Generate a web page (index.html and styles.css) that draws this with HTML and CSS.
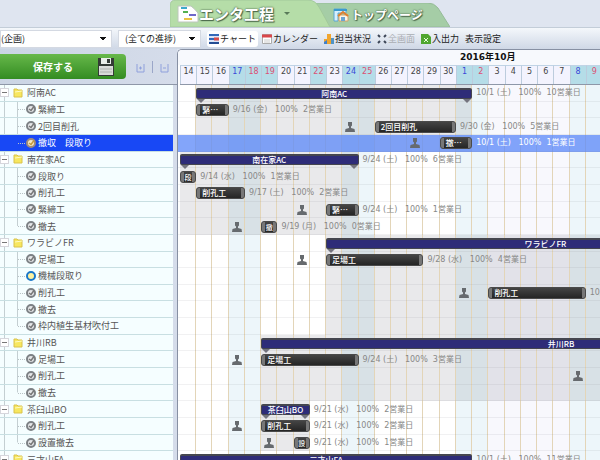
FILE: index.html
```
<!DOCTYPE html>
<html lang="ja">
<head>
<meta charset="utf-8">
<title>エンタ工程</title>
<link rel="stylesheet" href="styles.css">
</head>
<body>
<svg class="defs" aria-hidden="true">
  <symbol id="person" viewBox="0 0 10 10"><path d="M3 0h4v3.500l-1 1v1.500l3.500 1 .5 3h-10l.5-3 3.500-1v-1.500l-1-1z"/></symbol>
  <symbol id="folder" viewBox="0 0 10 10"><path d="M1 1h3l1 1h4v7h-8z" fill="#f7e75f" stroke="#d9c24c"/><path d="M2 4l7-1" stroke="#fffbc0"/></symbol>
  <symbol id="done" viewBox="0 0 10 10"><circle cx="5" cy="5" r="4" fill="#e4e6e8" stroke="#7c8185" stroke-width="2"/><path d="M3 5l2 1.500 3-4" fill="none" stroke="#777" stroke-width="1.500"/></symbol>
  <symbol id="active" viewBox="0 0 10 10"><circle cx="5" cy="5" r="4" fill="#fff2a0" stroke="#1b77c9" stroke-width="2"/></symbol>
  <symbol id="warm" viewBox="0 0 10 10"><circle cx="5" cy="5" r="4" fill="#f6e8c0" stroke="#a08c78" stroke-width="2"/><path d="M3 5l2 1.500 3-4" fill="none" stroke="#c59a3c" stroke-width="1.500"/></symbol>
</svg>
<div class="app">
  <nav class="tabs">
    <a class="tab current" href="#chart">
      <svg class="shape" viewBox="0 0 160 27" preserveAspectRatio="none"><path d="M0 27V6Q0 0 6 0H138Q145 0 149 7L160 27z" fill="#b5dda8" stroke="#a2c99a"/></svg>
      <span class="face">
        <svg class="tabicon" viewBox="0 0 22 18"><path d="M1 1h13q4 3 7 7v9h-20z" fill="#fff" stroke="#bcc6bc"/><path d="M4 3h6" stroke="#3caacb" stroke-width="2"/><path d="M6 7h5" stroke="#54b04f" stroke-width="2"/><path d="M12 10h7" stroke="#6f68ca" stroke-width="2"/><path d="M7 14h8" stroke="#ecc244" stroke-width="2"/></svg>
        <span class="name">エンタ工程</span><i class="caret"></i>
      </span>
    </a>
    <a class="tab" href="#top">
      <svg class="shape" viewBox="0 0 134 24" preserveAspectRatio="none"><path d="M0 0H112Q118 0 122 5L134 24H11z" fill="#a5cda6" stroke="#96bb98"/></svg>
      <span class="face">
        <svg class="homeicon" viewBox="0 0 16 14"><path d="M1 1h12v4H5v8H1z" fill="#d6efff" stroke="#5ba6d2"/><path d="M1 2h13" stroke="#3a9ad0" stroke-width="2"/><path d="M6 7h9v6H6z" fill="#fff6e6" stroke="#d2a06a"/><path d="M5 8l5-4 5 4" fill="none" stroke="#e0812f" stroke-width="2"/><path d="M8 9h4v4H8z" fill="#6aa5d4"/></svg>
        <span class="name">トップページ</span>
      </span>
    </a>
  </nav>

  <header class="toolbar">
    <select class="pick area" aria-label="企画"><option>(企画)</option></select>
    <select class="pick" aria-label="進捗"><option>(全ての進捗)</option></select>
    <button class="tool on"><svg viewBox="0 0 10 10"><path d="M0 0h10v10H0z" fill="#dce6f8"/><path d="M0 1h10M0 5h7" stroke="#3569b8" stroke-width="2"/><path d="M5 5h5" stroke="#d84b4b" stroke-width="3"/><path d="M0 9h10" stroke="#244d94" stroke-width="2"/></svg>チャート</button>
    <button class="tool"><svg viewBox="0 0 10 10"><path d="M.5.5h9v9h-9z" fill="#fff" stroke="#aaa"/><path d="M0 2h10" stroke="#d9474b" stroke-width="3"/><path d="M2 6h6M2 8h6" stroke="#ccc"/></svg>カレンダー</button>
    <button class="tool"><svg viewBox="0 0 10 10"><path d="M0 5h3v5H0z" fill="#f0a52e"/><path d="M3 0h4v10H3z" fill="#f0a52e"/><path d="M0 8l3-2v4H0z" fill="#3d80cd"/><path d="M7 4h3v6H7z" fill="#4f94c8"/></svg>担当状況</button>
    <button class="tool off" disabled><svg viewBox="0 0 10 10"><path d="M1 1l2 2M9 1l-2 2M1 9l2-2M9 9l-2-2" stroke="#3d4657" stroke-width="2"/></svg>全画面</button>
    <button class="tool"><svg viewBox="0 0 10 10"><path d="M0 0h7l3 3v7H0z" fill="#4fa62f"/><path d="M3 4l4 4M7 4l-4 4" stroke="#e7ffd9"/></svg>入出力</button>
    <button class="tool">表示設定</button>
  </header>

  <main class="work">
    <section class="side">
      <div class="actions">
        <button class="save"><span>保存する</span>
          <svg viewBox="0 0 18 18"><path d="M1 0h16v18H1z" fill="#343b36"/><path d="M4 0h10v6H4z" fill="#e9eee9"/><path d="M10 1h3v4h-3z" fill="#343b36"/><path d="M2 8h14v9H2z" fill="#d9dcd9"/><path d="M3 11h12M3 14h12" stroke="#aeb3ae"/></svg>
        </button>
        <button class="fold" aria-label="すべて開く"><svg viewBox="0 0 9 9"><path d="M1 0v8h7V0M3 4h3M4.500 2.500v3" fill="none" stroke="#8fa0dc"/></svg></button>
        <i class="rule"></i>
        <button class="fold" aria-label="すべて閉じる"><svg viewBox="0 0 9 9"><path d="M1 0v8h7V0M3 4h3" fill="none" stroke="#8fa0dc"/></svg></button>
      </div>
      <ul class="tree">
        <li class="group"><button class="toggle" aria-label="閉じる"></button><svg><use href="#folder"/></svg><span>阿南AC</span></li>
        <li><svg><use href="#done"/></svg><span>緊締工</span></li>
        <li><svg><use href="#done"/></svg><span>2回目削孔</span></li>
        <li class="last selected"><svg><use href="#warm"/></svg><span>撤収　段取り</span></li>
        <li class="group"><button class="toggle" aria-label="閉じる"></button><svg><use href="#folder"/></svg><span>南在家AC</span></li>
        <li><svg><use href="#done"/></svg><span>段取り</span></li>
        <li><svg><use href="#done"/></svg><span>削孔工</span></li>
        <li><svg><use href="#done"/></svg><span>緊締工</span></li>
        <li class="last"><svg><use href="#done"/></svg><span>撤去</span></li>
        <li class="group"><button class="toggle" aria-label="閉じる"></button><svg><use href="#folder"/></svg><span>ワラビノFR</span></li>
        <li><svg><use href="#done"/></svg><span>足場工</span></li>
        <li><svg><use href="#active"/></svg><span>機械段取り</span></li>
        <li><svg><use href="#done"/></svg><span>削孔工</span></li>
        <li><svg><use href="#done"/></svg><span>撤去</span></li>
        <li class="last"><svg><use href="#done"/></svg><span>枠内植生基材吹付工</span></li>
        <li class="group"><button class="toggle" aria-label="閉じる"></button><svg><use href="#folder"/></svg><span>井川RB</span></li>
        <li><svg><use href="#done"/></svg><span>足場工</span></li>
        <li><svg><use href="#done"/></svg><span>削孔工</span></li>
        <li class="last"><svg><use href="#done"/></svg><span>撤去</span></li>
        <li class="group"><button class="toggle" aria-label="閉じる"></button><svg><use href="#folder"/></svg><span>茶臼山BO</span></li>
        <li><svg><use href="#done"/></svg><span>削孔工</span></li>
        <li class="last"><svg><use href="#done"/></svg><span>設置撤去</span></li>
        <li class="group"><button class="toggle" aria-label="閉じる"></button><svg><use href="#folder"/></svg><span>三才山FA</span></li>
      </ul>
    </section>

    <section class="chart">
      <div class="cols months"><b>2016年10月</b></div>
      <div class="cols days">
        <span>14</span><span>15</span><span>16</span><span class="sat">17</span><span class="sun">18</span><span class="sun">19</span><span>20</span><span>21</span><span class="sun">22</span><span>23</span><span class="sat">24</span><span class="sun">25</span><span>26</span><span>27</span><span>28</span><span>29</span><span>30</span><span class="sat">1</span><span class="sun">2</span><span>3</span><span>4</span><span>5</span><span>6</span><span>7</span><span class="sat">8</span><span class="sun">9</span>
      </div>
      <div class="cols plan">
        <i class="rest" style="grid-column:4/6"></i>
        <i class="rest" style="grid-column:11/13"></i>
        <i class="rest" style="grid-column:18/20"></i>
        <i class="rest" style="grid-column:25/27"></i>
        <i class="later"></i>
        <i class="span" style="grid-area:1/2/5/19"></i>
        <i class="span" style="grid-area:5/1/10/12"></i>
        <i class="span" style="grid-area:10/10/16/27"></i>
        <i class="span" style="grid-area:16/6/20/27"></i>
        <i class="span" style="grid-area:20/6/23/9"></i>
        <div class="lines"><i></i><i></i><i></i><i></i><i></i><i></i><i></i><i></i><i></i><i></i><i></i><i></i><i></i><i></i><i></i><i></i><i></i><i></i><i></i><i></i><i></i><i></i><i></i><i></i><i></i><i></i></div>
        <div class="rows"><i></i><i></i><i></i><i class="selected"></i><i></i><i></i><i></i><i></i><i></i><i></i><i></i><i></i><i></i><i></i><i></i><i></i><i></i><i></i><i></i><i></i><i></i><i></i><i></i></div>

        <div class="sum" style="grid-area:1/2/2/19">阿南AC</div><span class="note" style="grid-area:1/19/2/27">10/1 (土)&nbsp;&nbsp; 100%&nbsp; 10営業日</span>
        <div class="bar" style="grid-area:2/2/3/4"><span>緊…</span></div><span class="note" style="grid-area:2/4/3/27">9/16 (金)&nbsp;&nbsp; 100%&nbsp; 2営業日</span>
        <svg class="who" style="grid-area:3/11"><use href="#person"/></svg><div class="bar" style="grid-area:3/13/4/18"><span>2回目削孔</span></div><span class="note" style="grid-area:3/18/4/27">9/30 (金)&nbsp;&nbsp; 100%&nbsp; 5営業日</span>
        <svg class="who" style="grid-area:4/15"><use href="#person"/></svg><div class="bar" style="grid-area:4/17/5/19"><span>撤…</span></div><span class="note lit" style="grid-area:4/19/5/27">10/1 (土)&nbsp;&nbsp; 100%&nbsp; 1営業日</span>

        <div class="sum" style="grid-area:5/1/6/12">南在家AC</div><span class="note" style="grid-area:5/12/6/27">9/24 (土)&nbsp;&nbsp; 100%&nbsp; 6営業日</span>
        <div class="bar tiny" style="grid-area:6/1/7/2"><span>段</span></div><span class="note" style="grid-area:6/2/7/27">9/14 (水)&nbsp;&nbsp; 100%&nbsp; 1営業日</span>
        <div class="bar" style="grid-area:7/2/8/5"><span>削孔工</span></div><span class="note" style="grid-area:7/5/8/27">9/17 (土)&nbsp;&nbsp; 100%&nbsp; 2営業日</span>
        <svg class="who" style="grid-area:8/8"><use href="#person"/></svg><div class="bar" style="grid-area:8/10/9/12"><span>緊…</span></div><span class="note" style="grid-area:8/12/9/27">9/24 (土)&nbsp;&nbsp; 100%&nbsp; 1営業日</span>
        <svg class="who" style="grid-area:9/4"><use href="#person"/></svg><div class="bar tiny" style="grid-area:9/6/10/7"><span>撤</span></div><span class="note" style="grid-area:9/7/10/27">9/19 (月)&nbsp;&nbsp; 100%&nbsp; 0営業日</span>

        <div class="sum" style="grid-area:10/10/11/27;width:159%">ワラビノFR</div>
        <svg class="who" style="grid-area:11/8"><use href="#person"/></svg><div class="bar" style="grid-area:11/10/12/16"><span>足場工</span></div><span class="note" style="grid-area:11/16/12/27">9/28 (水)&nbsp;&nbsp; 100%&nbsp; 4営業日</span>
        <svg class="who" style="grid-area:13/18"><use href="#person"/></svg><div class="bar" style="grid-area:13/20/14/26"><span>削孔工</span></div><span class="note" style="grid-area:13/26/14/27">10/8</span>

        <div class="sum" style="grid-area:16/6/17/27;width:176%">井川RB</div>
        <svg class="who" style="grid-area:17/4"><use href="#person"/></svg><div class="bar" style="grid-area:17/6/18/12"><span>足場工</span></div><span class="note" style="grid-area:17/12/18/27">9/24 (土)&nbsp;&nbsp; 100%&nbsp; 3営業日</span>
        <svg class="who" style="grid-area:18/25"><use href="#person"/></svg>

        <div class="sum" style="grid-area:20/6/21/9">茶臼山BO</div><span class="note" style="grid-area:20/9/21/27">9/21 (水)&nbsp;&nbsp; 100%&nbsp; 2営業日</span>
        <svg class="who" style="grid-area:21/4"><use href="#person"/></svg><div class="bar" style="grid-area:21/6/22/9"><span>削孔工</span></div><span class="note" style="grid-area:21/9/22/27">9/21 (水)&nbsp;&nbsp; 100%&nbsp; 2営業日</span>
        <svg class="who" style="grid-area:22/6"><use href="#person"/></svg><div class="bar tiny" style="grid-area:22/8/23/9"><span>設</span></div><span class="note" style="grid-area:22/9/23/27">9/21 (水)&nbsp;&nbsp; 100%&nbsp; 1営業日</span>

        <div class="sum" style="grid-area:23/1/24/19">三才山FA</div><span class="note" style="grid-area:23/19/24/27">10/1 (土)&nbsp;&nbsp; 100%&nbsp; 11営業日</span>
      </div>
    </section>
  </main>
</div>
</body>
</html>
```
FILE: styles.css
```
* { box-sizing: border-box; }
body { margin: 0; font-family: "DejaVu Sans", "Noto Sans CJK JP", sans-serif; font-size: 9px; color: #444; background: #dfe5f0; overflow: hidden; }
button, select { font: inherit; color: inherit; border: 0; margin: 0; padding: 0; background: none; }
.defs { display: none; }
.app { display: flex; flex-direction: column; height: 100vh; }

.tabs { display: flex; align-items: flex-end; height: 27px; flex: none; padding-left: 170px; }
.tab { display: grid; width: 134px; height: 24px; margin-left: -14px; text-decoration: none; color: #fff; }
.tab > * { grid-area: 1 / 1; }
.tab.current { width: 160px; height: 27px; margin-left: 0; z-index: 1; }
.shape { width: 100%; height: 100%; }
.face { display: flex; align-items: center; gap: 2px; padding-left: 17px; }
.current .face { padding-left: 7px; gap: 0; }
.tabicon { width: 22px; height: 18px; }
.homeicon { width: 16px; height: 14px; }
.name { font: bold 12px/20px "Noto Sans CJK JP", sans-serif; white-space: nowrap; text-shadow: 0 0 1px #4b684b, 1px 1px 1px #4b684b, 0 0 2px #4b684b; }
.current .name { font-size: 15px; }
.caret { border: 3px solid transparent; border-top-color: #587a58; border-bottom: 0; margin-left: 10px; }

.toolbar { display: flex; align-items: center; height: 22px; flex: none; border-top: 1px solid #c3cdd8; background: linear-gradient(#f4f7fb, #cfd8e6); font-family: "Noto Sans CJK JP", sans-serif; white-space: nowrap; color: #222; }
.pick { appearance: none; height: 18px; width: 83px; margin-right: 6px; padding: 0 6px; border: 1px solid #d4d9e2; font-size: 9px; background: linear-gradient(to bottom right, #111 50%, transparent 50%) right 5px center / 3px 4px no-repeat, linear-gradient(to bottom left, #111 50%, transparent 50%) right 8px center / 3px 4px no-repeat, #fff; }
.pick.area { width: 112px; padding: 0; }
.tool { display: flex; align-items: center; gap: 1px; height: 16px; padding: 0 2px; margin-right: 2px; border-radius: 3px; }
.tool svg { width: 10px; height: 10px; }
.tool.on { background: #fff; }
.tool.off { color: #aaadb2; }

.work { display: flex; flex: 1; min-height: 0; }
.side { display: flex; flex-direction: column; width: 177px; flex: none; background: linear-gradient(90deg, #cbd5e4, #d5dcea); }
.actions { display: flex; align-items: center; gap: 7px; height: 36px; flex: none; border-bottom: 1px solid #8e97a8; }
.save { display: flex; align-items: center; justify-content: flex-end; gap: 24px; width: 126px; height: 25px; padding-right: 11px; margin-right: 3px; border-radius: 0 4px 4px 0; background: linear-gradient(#67b84a, #338c22); color: #fff; font: bold 10px/20px "Noto Sans CJK JP", sans-serif; }
.save svg { width: 18px; height: 18px; }
.fold { width: 9px; height: 9px; display: flex; margin-top: 4px; }
.fold svg { width: 9px; height: 9px; }
.rule { width: 1px; height: 12px; background: #9aa6c8; }
.tree { display: grid; grid-template-rows: repeat(23, minmax(0, 1fr)); flex: 1; min-height: 0; margin: 0 4px -8px 0; padding: 0; list-style: none; background: #f5feff; }
.tree li { position: relative; display: flex; align-items: center; gap: 2px; padding-left: 26px; border-bottom: 1px solid #c8dfe2; font: 9px/15px "Noto Sans CJK JP", sans-serif; color: #555; white-space: nowrap; background: linear-gradient(90deg, transparent 4px, #c4cfd2 4px, #c4cfd2 5px, transparent 5px, transparent 17px, #c4cfd2 17px, #c4cfd2 18px, transparent 18px); }
.tree li::before { content: ""; position: absolute; left: 18px; top: 50%; width: 7px; border-top: 1px dotted #b9c3c6; }
.tree li.last { background: linear-gradient(90deg, transparent 4px, #c4cfd2 4px, #c4cfd2 5px, transparent 5px), linear-gradient(#c4cfd2, #c4cfd2) 17px 0 / 1px 50% no-repeat; }
.tree li.group { padding-left: 0; gap: 4px; background: linear-gradient(90deg, transparent 4px, #c4cfd2 4px, #c4cfd2 5px, transparent 5px); }
.tree li.group::before { display: none; }
.tree li.selected { background: #1848f5; color: #fff; }
.tree svg { width: 10px; height: 10px; flex: none; }
.toggle { width: 9px; height: 9px; border: 1px solid #d6d6dc; background: linear-gradient(#777, #777) center / 5px 1px no-repeat #fff; }

.chart { display: flex; flex-direction: column; flex: 1; min-width: 0; overflow: hidden; border: solid #8790a3; border-width: 1px 0 0 1px; border-radius: 5px 0 0 0; padding-left: 2px; background: #fff; }
.cols { display: grid; grid-template-columns: repeat(26, minmax(0, 1fr)); margin-right: -2px; flex: none; }
.months { height: 15px; margin-left: -2px; padding-left: 2px; background: #f7f9fd; }
.months b { grid-column: 18 / -1; padding-left: 4px; font-size: 9px; line-height: 15px; color: #111; white-space: nowrap; }
.days { height: 20px; border-bottom: 1px solid #8e97a8; }
.days span { border-top: 1px solid #c0d4e6; border-left: 1px solid #bcccdd; background: #f3f3fe; font-size: 8px; line-height: 12px; text-align: center; }
.days .sat { color: #3949d8; background: #b5dde8; }
.days .sun { color: #dc5074; background: #b5dde8; }
.cols.plan { flex: 1; min-height: 0; grid-template-rows: repeat(23, minmax(0, 1fr)); margin-bottom: -8px; }
.rest { grid-row: 1 / -1; background: #edf6fa; }
.later { grid-area: 1 / 20 / -1 / 25; background: #f8f8fd; }
.span { background: rgba(40, 40, 60, .1); }
.lines { grid-area: 1 / 1 / -1 / -1; display: grid; grid-template-columns: repeat(26, minmax(0, 1fr)); }
.lines i { border-right: 1px solid #e3d5b8; }
.rows { grid-area: 1 / 1 / -1 / -1; display: grid; grid-template-rows: repeat(23, minmax(0, 1fr)); margin-left: -2px; }
.rows i { border-bottom: 1px solid rgba(120, 120, 130, .1); }
.rows .selected { background: rgba(90, 135, 248, .75); }
.sum { position: relative; align-self: center; height: 11px; border: 1px solid #45464f; border-width: 2px 1px 1px; border-radius: 2px; background: #2e2c78; color: #fff; font: 8px/8px "Noto Sans CJK JP", sans-serif; font-weight: 500; text-align: center; white-space: nowrap; }
.sum::before, .sum::after { content: ""; position: absolute; top: 9px; border: 4px solid transparent; border-top-color: #74747e; border-bottom: 0; }
.sum::before { left: 0; }
.sum::after { right: 0; }
.bar { align-self: center; height: 12px; min-width: 0; border: 1px solid #4a4a4a; border-radius: 3px; background: #777; padding: 0 3px; }
.bar span { display: block; height: 10px; padding-left: 2px; overflow: hidden; background: linear-gradient(#444, #252525); color: #fff; font: 8px/10px "Noto Sans CJK JP", sans-serif; font-weight: 500; white-space: nowrap; }
.bar.tiny span { padding-left: 0; font-size: 7px; text-align: center; }
.note { align-self: center; padding-left: 4px; font: 8px/14px "DejaVu Sans", "Noto Sans CJK JP", sans-serif; color: #888; white-space: nowrap; }
.note.lit { color: #fff; }
.who { width: 10px; height: 10px; align-self: center; justify-self: center; fill: #666a6e; }
```
